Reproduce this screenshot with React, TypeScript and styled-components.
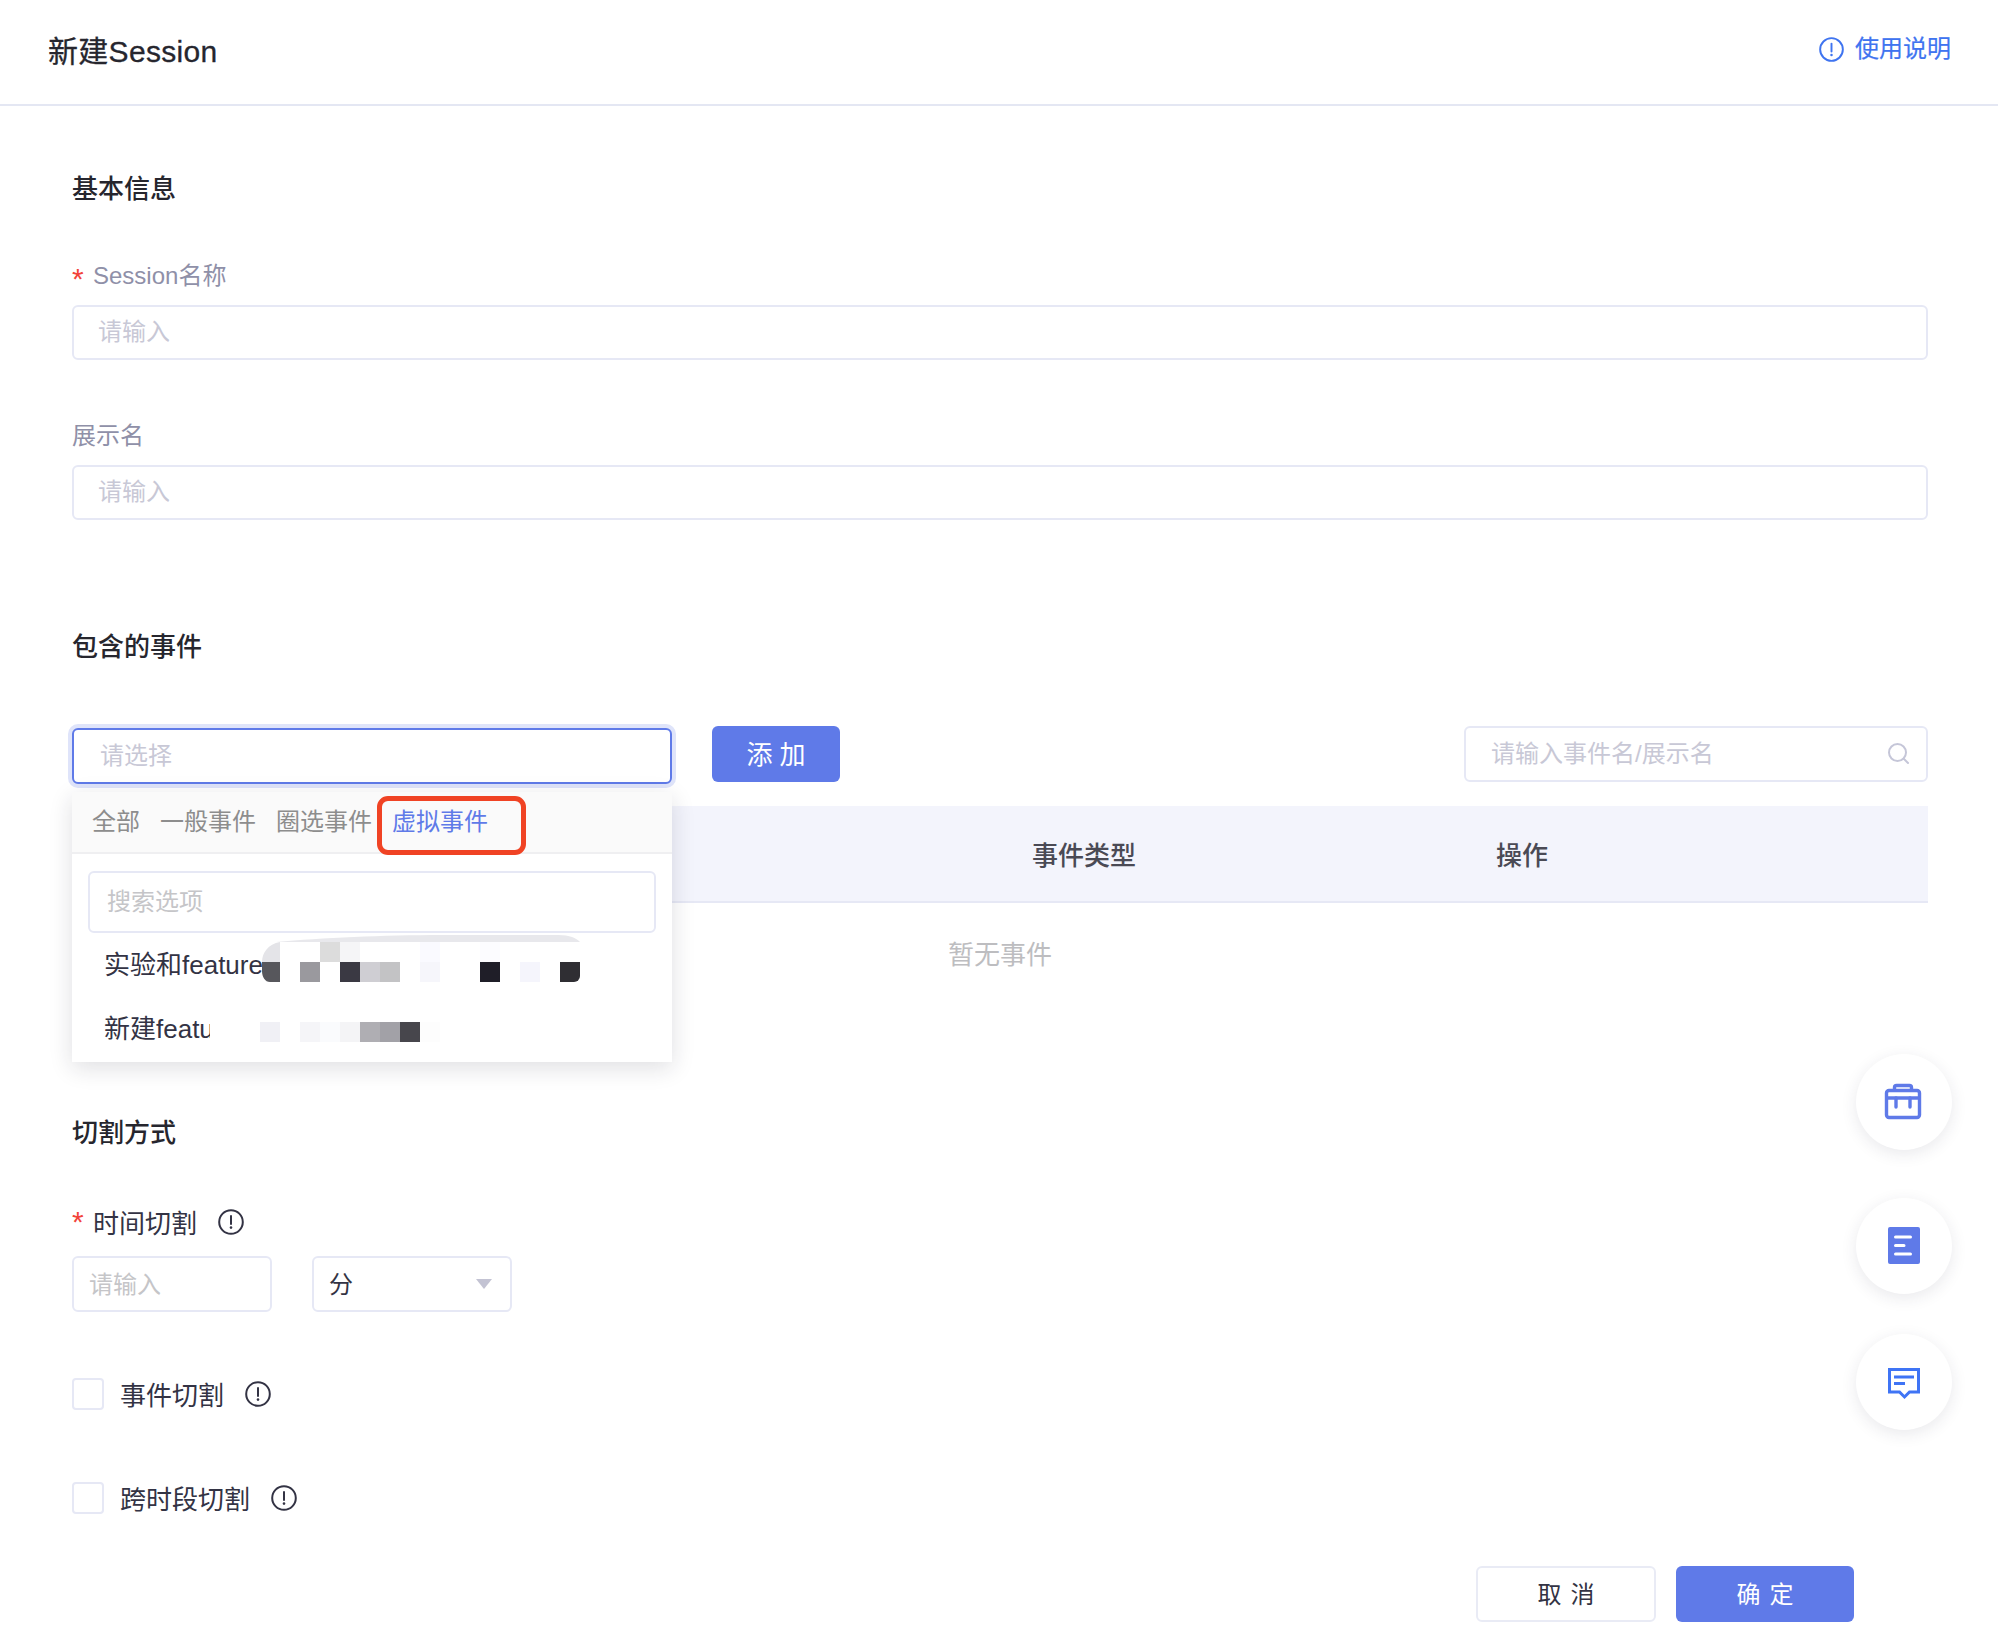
import React from 'react';
import styled, { createGlobalStyle } from 'styled-components';

const GlobalStyle = createGlobalStyle`
  html, body {
    margin: 0;
    padding: 0;
    background: #fff;
  }

  body {
    font-family: "Liberation Sans", "Noto Sans CJK SC", sans-serif;
    color: #333344;
  }

  *, *::before, *::after {
    box-sizing: border-box;
  }
`;

const Page = styled.div`
  position: relative;
  width: 1998px;
  height: 1630px;
  overflow: hidden;
  background: #fff;
`;

const Header = styled.header`
  height: 106px;
  padding: 0 47px 6px 48px;
  display: flex;
  align-items: center;
  justify-content: space-between;
  border-bottom: 2px solid #e4e7f3;
`;

const PageTitle = styled.h1`
  margin: 0;
  font-size: 30px;
  font-weight: 400;
  letter-spacing: 0.3px;
  color: #26262e;
  -webkit-text-stroke: 0.3px #26262e;
`;

const HelpLink = styled.a`
  display: flex;
  align-items: center;
  gap: 11px;
  font-size: 24px;
  line-height: 32px;
  color: #3f74f0;
  -webkit-text-stroke: 0.2px #3f74f0;
`;

const Main = styled.main`
  padding: 65px 70px 0 72px;
`;

const SectionTitle = styled.h2<{ $top?: number }>`
  margin: ${(p) => p.$top ?? 0}px 0 0;
  font-size: 26px;
  line-height: 36px;
  font-weight: 500;
  color: #26262e;
`;

const FieldLabel = styled.label<{ $top: number }>`
  display: block;
  margin-top: ${(p) => p.$top}px;
  font-size: 24px;
  line-height: 34px;
  color: #8f90a8;
`;

const Star = styled.span`
  display: inline-block;
  width: 21px;
  font-size: 30px;
  line-height: 0;
  vertical-align: -5px;
  color: #f2433a;
`;

const TextInput = styled.input`
  display: block;
  width: 100%;
  height: 55px;
  margin-top: 12px;
  padding: 0 24px 1px;
  font: inherit;
  font-size: 24px;
  color: #333344;
  background: #fff;
  border: 2px solid #e6e8f5;
  border-radius: 6px;
  outline: none;

  &::placeholder {
    color: #c8c8d6;
  }
`;

const Toolbar = styled.div`
  display: flex;
  align-items: flex-start;
  height: 56px;
  margin-top: 61px;
`;

const SelectWrap = styled.div`
  position: relative;
  width: 600px;
  height: 56px;
  margin-top: 2px;
  z-index: 10;
`;

const FocusedSelect = styled.div`
  height: 56px;
  padding: 0 26px 5px;
  display: flex;
  align-items: center;
  font-size: 24px;
  color: #c8c8d6;
  background: #fff;
  border: 2px solid #5f7ae8;
  border-radius: 6px;
  box-shadow: 0 0 0 4px #dfe4fa;
`;

const Dropdown = styled.div`
  position: absolute;
  left: 0;
  right: 0;
  top: 64px;
  height: 270px;
  background: #fff;
  box-shadow: 0 6px 22px rgba(30, 30, 50, 0.14);
`;

const TabBar = styled.div`
  display: flex;
  height: 62px;
  padding-left: 20px;
  gap: 20px;
  background: #fafafa;
  border-bottom: 2px solid #efeff1;
`;

const Tab = styled.div<{ $active?: boolean }>`
  position: relative;
  display: flex;
  align-items: center;
  padding-bottom: 5px;
  font-size: 24px;
  color: ${(p) => (p.$active ? '#5f7ae8' : '#8d8d8d')};

  ${(p) =>
    p.$active &&
    `
    &::after {
      content: '';
      position: absolute;
      left: -15px;
      right: -38px;
      top: 4px;
      height: 59px;
      border: 5px solid #f04324;
      border-radius: 11px;
    }
  `}
`;

const OptionSearch = styled.div`
  height: 62px;
  margin: 17px 16px 0;
  padding: 0 17px 5px;
  display: flex;
  align-items: center;
  font-size: 24px;
  color: #c5c5c8;
  border: 2px solid #e6e8f5;
  border-radius: 6px;
`;

const Option = styled.div`
  position: relative;
  height: 64px;
  padding: 0 0 5px 32px;
  display: flex;
  align-items: center;
  font-size: 26px;
  color: #333344;
`;

const Mosaic = styled.svg<{ $left: number; $top: number }>`
  position: absolute;
  left: ${(p) => p.$left}px;
  top: ${(p) => p.$top}px;
`;

const AddButton = styled.button`
  width: 128px;
  height: 56px;
  margin-left: 40px;
  padding: 0 0 3px 7px;
  font: inherit;
  font-size: 26px;
  letter-spacing: 7px;
  color: #fff;
  background: #5f7ae8;
  border: none;
  border-radius: 6px;
`;

const SearchBox = styled.div`
  width: 464px;
  height: 56px;
  margin-left: auto;
  padding: 0 15px 0 25px;
  display: flex;
  align-items: center;
  justify-content: space-between;
  font-size: 24px;
  color: #c8c8d6;
  border: 2px solid #e6e8f5;
  border-radius: 6px;
`;

const SearchText = styled.span`
  padding-bottom: 5px;
`;

const TableHead = styled.div`
  display: grid;
  grid-template-columns: 960px 464px 1fr;
  align-items: center;
  height: 97px;
  margin-top: 24px;
  font-size: 26px;
  font-weight: 500;
  color: #4a4a55;
  background: #f3f4fc;
  border-bottom: 2px solid #e6e8f5;
`;

const EmptyRow = styled.div`
  height: 104px;
  padding-bottom: 5px;
  display: flex;
  align-items: center;
  justify-content: center;
  font-size: 26px;
  color: #bdbdc0;
`;

const CutLabel = styled.div`
  display: flex;
  align-items: center;
  height: 34px;
  margin-top: 54px;
  font-size: 26px;
  color: #333344;
`;

const LabelText = styled.span`
  padding-bottom: 2px;
`;

const CutRow = styled.div`
  display: flex;
  gap: 40px;
  margin-top: 17px;
`;

const SmallInput = styled.div`
  width: 200px;
  height: 56px;
  padding: 0 15px 4px;
  display: flex;
  align-items: center;
  justify-content: space-between;
  font-size: 24px;
  color: #c5c5c8;
  border: 2px solid #e6e8f5;
  border-radius: 6px;
`;

const SelectValue = styled(SmallInput)`
  padding-right: 18px;
  color: #333344;
`;

const Caret = styled.span`
  width: 0;
  height: 0;
  margin-top: 4px;
  border-left: 8px solid transparent;
  border-right: 8px solid transparent;
  border-top: 10px solid #c3c3d3;
`;

const CheckRow = styled.label<{ $top: number }>`
  display: flex;
  align-items: center;
  height: 32px;
  margin-top: ${(p) => p.$top}px;
  font-size: 26px;
  color: #333344;
`;

const CheckBox = styled.span`
  width: 32px;
  height: 32px;
  margin-right: 16px;
  border: 2px solid #e6e8f5;
  border-radius: 4px;
`;

const InfoGap = styled.span<{ $gap: number }>`
  display: flex;
  margin-left: ${(p) => p.$gap}px;
`;

const Footer = styled.div`
  display: flex;
  justify-content: flex-end;
  gap: 20px;
  margin-top: 52px;
  padding-right: 74px;
`;

const FooterButton = styled.button<{ $primary?: boolean }>`
  width: ${(p) => (p.$primary ? 178 : 180)}px;
  height: 56px;
  padding: 0 0 3px 9px;
  font: inherit;
  font-size: 24px;
  letter-spacing: 9px;
  color: ${(p) => (p.$primary ? '#fff' : '#333344')};
  background: ${(p) => (p.$primary ? '#5f7ae8' : '#fff')};
  border: ${(p) => (p.$primary ? 'none' : '2px solid #e9ebf5')};
  border-radius: 6px;
`;

const FloatButton = styled.div<{ $top: number }>`
  position: absolute;
  left: 1856px;
  top: ${(p) => p.$top}px;
  width: 96px;
  height: 96px;
  display: flex;
  align-items: center;
  justify-content: center;
  background: #fff;
  border-radius: 50%;
  box-shadow: 0 4px 16px rgba(40, 40, 70, 0.1);
`;

const InfoIcon = ({ size = 26, color = '#333344' }: { size?: number; color?: string }) => (
  <svg width={size} height={size} viewBox="0 0 26 26" fill="none">
    <circle cx="13" cy="13" r="11.8" stroke={color} strokeWidth="2" />
    <path d="M13 7v8" stroke={color} strokeWidth="2" strokeLinecap="round" />
    <circle cx="13" cy="18.6" r="1.3" fill={color} />
  </svg>
);

const SearchIcon = () => (
  <svg width="24" height="24" viewBox="0 0 24 24" fill="none">
    <circle cx="10.5" cy="10.5" r="8.5" stroke="#c5c6d8" strokeWidth="2" />
    <path d="M17 17l4 4" stroke="#c5c6d8" strokeWidth="2" strokeLinecap="round" />
  </svg>
);

const BriefcaseIcon = () => (
  <svg width="50" height="50" viewBox="-1 2 50 50" fill="none" stroke="#5f7ae8" strokeWidth="3.4">
    <path d="M14.5 15v-2.5a2 2 0 0 1 2-2h13a2 2 0 0 1 2 2V15" />
    <rect x="6.5" y="15.5" width="33" height="27" rx="2.5" />
    <path d="M6 23h34" />
    <path d="M16 23v9M30 23v9" strokeLinecap="round" />
  </svg>
);

const DocIcon = () => (
  <svg width="50" height="50" viewBox="-1 1 50 50">
    <rect x="8" y="7" width="32" height="37" rx="2" fill="#5f7ae8" />
    <path
      d="M15.5 17h15M15.5 25.5h8.5M15.5 34h15"
      stroke="#fff"
      strokeWidth="3"
      strokeLinecap="round"
    />
  </svg>
);

const ChatIcon = () => (
  <svg width="50" height="50" viewBox="-1 2 50 50" fill="none">
    <path d="M9.5 14.5h29v22.5h-9l-5 5-5-5h-10z" stroke="#3f74f5" strokeWidth="3" />
    <path d="M14 22h20M14 28.5h11" stroke="#3f74f5" strokeWidth="3" />
  </svg>
);

const MosaicOne = () => (
  <Mosaic $left={190} $top={2} width="320" height="47" viewBox="0 0 320 47">
    <path d="M14 7 C60 3 120 0 180 0 H296 C308 0 314 3 318 7Z" fill="#e8e8ec" />
    <path d="M0 27C0 18 6 9 18 7H318V38a9 9 0 0 1-9 9H8C3 47 0 42 0 36Z" fill="#fff" />
    <path d="M0 27C0 18 6 9 18 7V27Z" fill="#e4e4e8" />
    <path d="M0 27H18V47H8C3 47 0 42 0 36Z" fill="#57575c" />
    <rect x="58" y="7" width="20" height="20" fill="#dcdcdc" />
    <rect x="78" y="7" width="20" height="20" fill="#f5f5f7" />
    <rect x="158" y="7" width="20" height="20" fill="#fafaff" />
    <rect x="218" y="7" width="20" height="20" fill="#fcfcff" />
    <rect x="38" y="27" width="20" height="20" fill="#9a999e" />
    <rect x="78" y="27" width="20" height="20" fill="#3a3943" />
    <rect x="98" y="27" width="20" height="20" fill="#cfced3" />
    <rect x="118" y="27" width="20" height="20" fill="#c3c3c5" />
    <rect x="158" y="27" width="20" height="20" fill="#f6f6fb" />
    <rect x="218" y="27" width="20" height="20" fill="#1f1e28" />
    <rect x="258" y="27" width="20" height="20" fill="#f5f5fc" />
    <path d="M298 27h20v14a6 6 0 0 1-6 6h-14z" fill="#2f2e33" />
  </Mosaic>
);

const MosaicTwo = () => (
  <Mosaic $left={138} $top={10} width="232" height="40" viewBox="0 0 232 40">
    <rect x="0" y="0" width="230" height="40" fill="#fff" />
    <rect x="50" y="15" width="20" height="20" fill="#f0f0f5" />
    <rect x="90" y="15" width="20" height="20" fill="#f5f5f8" />
    <rect x="110" y="15" width="20" height="20" fill="#fafbfd" />
    <rect x="130" y="15" width="20" height="20" fill="#f4f4f6" />
    <rect x="150" y="15" width="20" height="20" fill="#afaeb3" />
    <rect x="170" y="15" width="20" height="20" fill="#a2a1a7" />
    <rect x="190" y="15" width="20" height="20" fill="#47464c" />
    <rect x="210" y="15" width="20" height="20" fill="#fdfdfd" />
  </Mosaic>
);

const App = () => {
  return (
    <Page>
      <GlobalStyle />
      <Header>
        <PageTitle>新建Session</PageTitle>
        <HelpLink>
          <InfoIcon size={25} color="#3f74f0" />
          使用说明
        </HelpLink>
      </Header>

      <Main>
        <SectionTitle>基本信息</SectionTitle>
        <FieldLabel $top={52}>
          <Star>*</Star>Session名称
        </FieldLabel>
        <TextInput placeholder="请输入" />
        <FieldLabel $top={59}>展示名</FieldLabel>
        <TextInput placeholder="请输入" />

        <SectionTitle $top={109}>包含的事件</SectionTitle>
        <Toolbar>
          <SelectWrap>
            <FocusedSelect>请选择</FocusedSelect>
            <Dropdown>
              <TabBar>
                <Tab>全部</Tab>
                <Tab>一般事件</Tab>
                <Tab>圈选事件</Tab>
                <Tab $active>虚拟事件</Tab>
              </TabBar>
              <OptionSearch>搜索选项</OptionSearch>
              <Option>
                实验和feature
                <MosaicOne />
              </Option>
              <Option>
                新建feature
                <MosaicTwo />
              </Option>
            </Dropdown>
          </SelectWrap>
          <AddButton>添加</AddButton>
          <SearchBox>
            <SearchText>请输入事件名/展示名</SearchText>
            <SearchIcon />
          </SearchBox>
        </Toolbar>

        <TableHead>
          <span />
          <span>事件类型</span>
          <span>操作</span>
        </TableHead>
        <EmptyRow>暂无事件</EmptyRow>

        <SectionTitle $top={108}>切割方式</SectionTitle>
        <CutLabel>
          <Star>*</Star>
          <LabelText>时间切割</LabelText>
          <InfoGap $gap={21}>
            <InfoIcon />
          </InfoGap>
        </CutLabel>
        <CutRow>
          <SmallInput>请输入</SmallInput>
          <SelectValue>
            分
            <Caret />
          </SelectValue>
        </CutRow>
        <CheckRow $top={66}>
          <CheckBox />
          <LabelText>事件切割</LabelText>
          <InfoGap $gap={21}>
            <InfoIcon />
          </InfoGap>
        </CheckRow>
        <CheckRow $top={72}>
          <CheckBox />
          <LabelText>跨时段切割</LabelText>
          <InfoGap $gap={21}>
            <InfoIcon />
          </InfoGap>
        </CheckRow>
        <Footer>
          <FooterButton>取消</FooterButton>
          <FooterButton $primary>确定</FooterButton>
        </Footer>
      </Main>

      <FloatButton $top={1054}>
        <BriefcaseIcon />
      </FloatButton>
      <FloatButton $top={1198}>
        <DocIcon />
      </FloatButton>
      <FloatButton $top={1334}>
        <ChatIcon />
      </FloatButton>
    </Page>
  );
};

export default App;
